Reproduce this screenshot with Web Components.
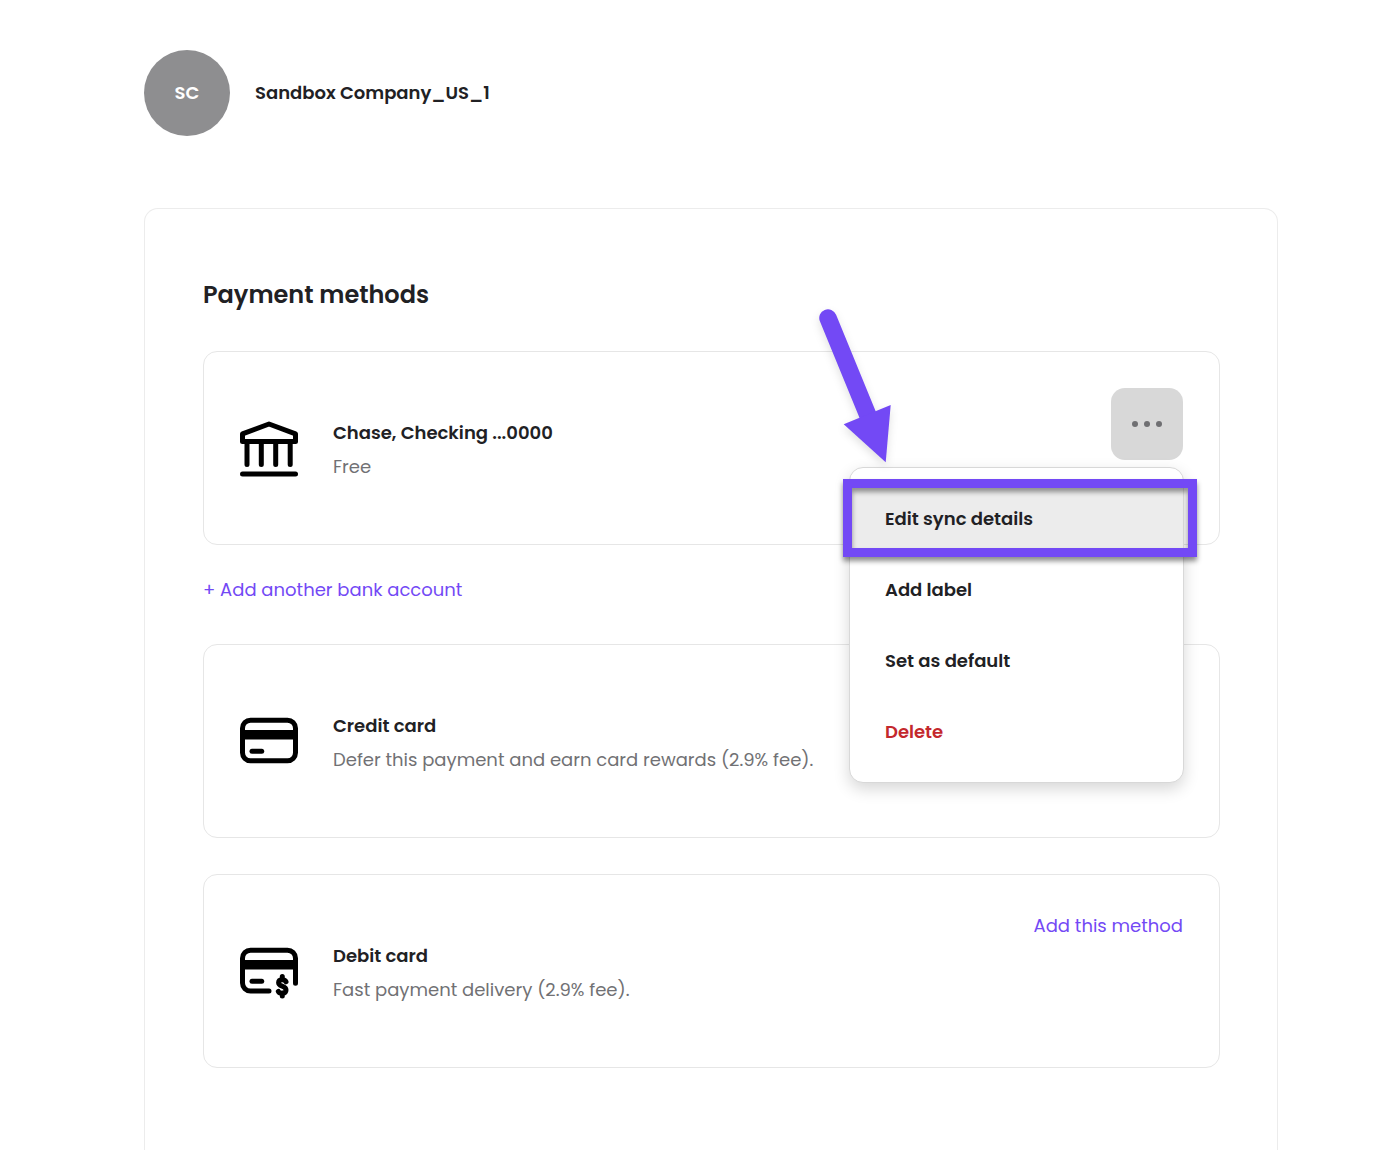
<!DOCTYPE html>
<html lang="en">
<head>
<meta charset="utf-8">
<title>Payment methods</title>
<style>
  body {
    margin: 0;
    background: #fff;
    color: #212124;
    font-family: Poppins, Inter, "Open Sans", sans-serif;
    font-size: 18px;
    line-height: 34px;
  }
</style>
</head>
<body>
<payment-page></payment-page>

<script>
const define = (tagName, html) => {
  const template = document.createElement('template');
  template.innerHTML = html;

  window.customElements.define(tagName, class extends HTMLElement {
    constructor() {
      super();
      this.attachShadow({ mode: 'open' });
      this.shadowRoot.appendChild(template.content.cloneNode(true));
    }
  });
};

define('company-header', `
  <style>
    :host {
      display: flex;
      align-items: center;
      gap: 25px;
      font-weight: 600;
    }
    .avatar {
      display: flex;
      flex: none;
      align-items: center;
      justify-content: center;
      width: 86px;
      height: 86px;
      border-radius: 50%;
      background: #8e8e90;
      color: #fff;
    }
  </style>
  <div class="avatar"><slot name="initials"></slot></div>
  <slot></slot>
`);

define('content-panel', `
  <style>
    :host {
      display: flex;
      flex: 1;
      flex-direction: column;
      padding: 66px 57px 80px 58px;
      border: 1px solid #ececec;
      border-bottom: 0;
      border-radius: 14px 14px 0 0;
    }
    h1 {
      margin: 0 0 36px;
      font-size: 24px;
      line-height: 40px;
      font-weight: 600;
    }
  </style>
  <h1><slot name="title"></slot></h1>
  <slot></slot>
`);

define('text-link', `
  <style>
    :host {
      display: block;
      line-height: 30px;
    }
    a {
      color: #7349f5;
      text-decoration: none;
    }
    a:hover {
      text-decoration: underline;
    }
  </style>
  <a href="#"><slot></slot></a>
`);

define('method-card', `
  <style>
    :host {
      display: flex;
      align-items: flex-start;
      gap: 35px;
      padding: 36px;
      border: 1px solid #e6e6e6;
      border-radius: 14px;
    }
    .icon {
      flex: none;
      width: 58px;
      height: 58px;
      padding-top: 32px;
    }
    .info {
      flex: 1;
      padding: 28px 0 24px;
    }
    h2,
    p {
      margin: 0;
      font-size: 18px;
      line-height: 34px;
    }
    h2 {
      font-weight: 600;
    }
    p {
      color: #717174;
    }
  </style>
  <div class="icon"><slot name="icon"></slot></div>
  <div class="info">
    <h2><slot name="title"></slot></h2>
    <p><slot></slot></p>
  </div>
  <slot name="action"></slot>
`);

const icons = {
  bank: `
    <path d="M2.5 21.5V13.8L29 4 55.500 13.8V21.500Z"/>
    <path d="M7 23v21.500M21.300 23v21.500M35.700 23v21.500M50.200 23v21.500"/>
    <path d="M2.500 54h53"/>`,
  credit: `
    <rect x="2.500" y="7.200" width="53" height="40.600" rx="8"/>
    <path d="M12 38.300h9.700"/>
    <path class="band" d="M3 21.700h52"/>`,
  debit: `
    <path d="M29 48H10.500a8 8 0 0 1-8-8V15.200a8 8 0 0 1 8-8h37a8 8 0 0 1 8 8V40.300"/>
    <path d="M12 38.300h9.700"/>
    <path class="band" d="M3 21.700h52"/>
    <path d="M46 38.800C44.800 36 38.600 36 38.600 39.800 38.600 44 46 42.300 46 46.900 46 51 39.600 51 38.300 48.400M42.300 33.500v3M42.300 50v3"/>`,
};

class MethodIcon extends HTMLElement {
  constructor() {
    super();
    this.attachShadow({ mode: 'open' });
  }

  connectedCallback() {
    this.shadowRoot.innerHTML = `
      <style>
        :host {
          display: block;
        }
        svg {
          display: block;
          width: 58px;
          height: 58px;
          fill: none;
          stroke: #000;
          stroke-width: 5;
          stroke-linecap: round;
          stroke-linejoin: round;
        }
        .band {
          stroke-width: 9.4;
          stroke-linecap: butt;
        }
      </style>
      <svg viewBox="0 0 58 58" aria-hidden="true">${icons[this.getAttribute('name')]}</svg>
    `;
  }
}
window.customElements.define('method-icon', MethodIcon);

define('menu-item', `
  <style>
    :host {
      display: block;
      position: relative;
    }
    button {
      display: block;
      width: 100%;
      height: 71px;
      padding: 0 35px;
      border: 0;
      background: none;
      color: inherit;
      font: inherit;
      font-weight: 600;
      text-align: left;
      cursor: pointer;
    }
    :host([danger]) {
      color: #c4282d;
    }
    :host([active]) button {
      background: #ececec;
    }
  </style>
  <button type="button" role="menuitem"><slot></slot></button>
  <slot name="marker"></slot>
`);

define('focus-frame', `
  <style>
    :host {
      position: absolute;
      inset: -4px -14px -3px -7px;
      box-sizing: border-box;
      border: 9px solid #7349f5;
      box-shadow: 0 4px 5px rgba(0, 0, 0, .45), inset 0 4px 5px rgba(0, 0, 0, .4);
      pointer-events: none;
    }
  </style>
`);

define('pointer-arrow', `
  <style>
    :host {
      position: absolute;
      bottom: 100%;
      left: -31px;
      pointer-events: none;
    }
    svg {
      display: block;
      width: 72px;
      height: 160px;
      overflow: visible;
      filter: drop-shadow(0 4px 4px rgba(0, 0, 0, .12));
    }
  </style>
  <svg viewBox="0 0 72 160" aria-hidden="true">
    <path d="M9 10L50 110" fill="none" stroke="#7349f5" stroke-width="17.500" stroke-linecap="round"/>
    <path d="M24.700 116.300L71.700 97 66.700 154.300Z" fill="#7349f5"/>
  </svg>
`);

class OptionsMenu extends HTMLElement {
  constructor() {
    super();
    this.attachShadow({ mode: 'open' });
    this.shadowRoot.innerHTML = `
      <style>
        :host {
          display: block;
          position: relative;
        }
        .toggle {
          display: flex;
          align-items: center;
          justify-content: center;
          width: 72px;
          height: 72px;
          padding: 0;
          border: 0;
          border-radius: 14px;
          background: #d8d8d8;
          cursor: pointer;
        }
        .toggle svg {
          width: 30px;
          height: 6px;
          fill: #6f6f72;
        }
        .menu {
          position: absolute;
          z-index: 1;
          top: 79px;
          right: -1px;
          width: 333px;
          padding: 15px 0;
          border: 1px solid #d8d8d8;
          border-radius: 14px;
          background: #fff;
          box-shadow: 0 6px 16px rgba(0, 0, 0, .16);
        }
        .menu[hidden] {
          display: none;
        }
      </style>
      <button class="toggle" type="button" aria-label="More options" aria-expanded="true">
        <svg viewBox="0 0 30 6" aria-hidden="true">
          <circle cx="3" cy="3" r="3"/><circle cx="15" cy="3" r="3"/><circle cx="27" cy="3" r="3"/>
        </svg>
      </button>
      <div class="menu" role="menu"><slot></slot></div>
    `;
  }

  connectedCallback() {
    const toggle = this.shadowRoot.querySelector('.toggle');
    const menu = this.shadowRoot.querySelector('.menu');
    toggle.addEventListener('click', () => {
      menu.hidden = !menu.hidden;
      toggle.setAttribute('aria-expanded', !menu.hidden);
    });
  }
}
window.customElements.define('options-menu', OptionsMenu);

define('payment-page', `
  <style>
    :host {
      display: flex;
      flex-direction: column;
      box-sizing: border-box;
      min-height: 100vh;
      padding: 50px 114px 0 144px;
    }
    company-header {
      margin-bottom: 72px;
    }
    .add-account {
      margin: 30px 0 39px;
    }
    .debit {
      margin-top: 36px;
    }
  </style>
  <company-header>
    <span slot="initials">SC</span>
    <span>Sandbox Company_US_1</span>
  </company-header>
  <content-panel>
    <span slot="title">Payment methods</span>
    <method-card>
      <method-icon slot="icon" name="bank"></method-icon>
      <span slot="title">Chase, Checking ...0000</span>
      Free
      <options-menu slot="action">
        <menu-item active>Edit sync details<focus-frame slot="marker"></focus-frame></menu-item>
        <menu-item>Add label</menu-item>
        <menu-item>Set as default</menu-item>
        <menu-item danger>Delete</menu-item>
        <pointer-arrow></pointer-arrow>
      </options-menu>
    </method-card>
    <text-link class="add-account">+ Add another bank account</text-link>
    <method-card>
      <method-icon slot="icon" name="credit"></method-icon>
      <span slot="title">Credit card</span>
      Defer this payment and earn card rewards (2.9% fee).
    </method-card>
    <method-card class="debit">
      <method-icon slot="icon" name="debit"></method-icon>
      <span slot="title">Debit card</span>
      Fast payment delivery (2.9% fee).
      <text-link slot="action">Add this method</text-link>
    </method-card>
  </content-panel>
`);
</script>
</body>
</html>
